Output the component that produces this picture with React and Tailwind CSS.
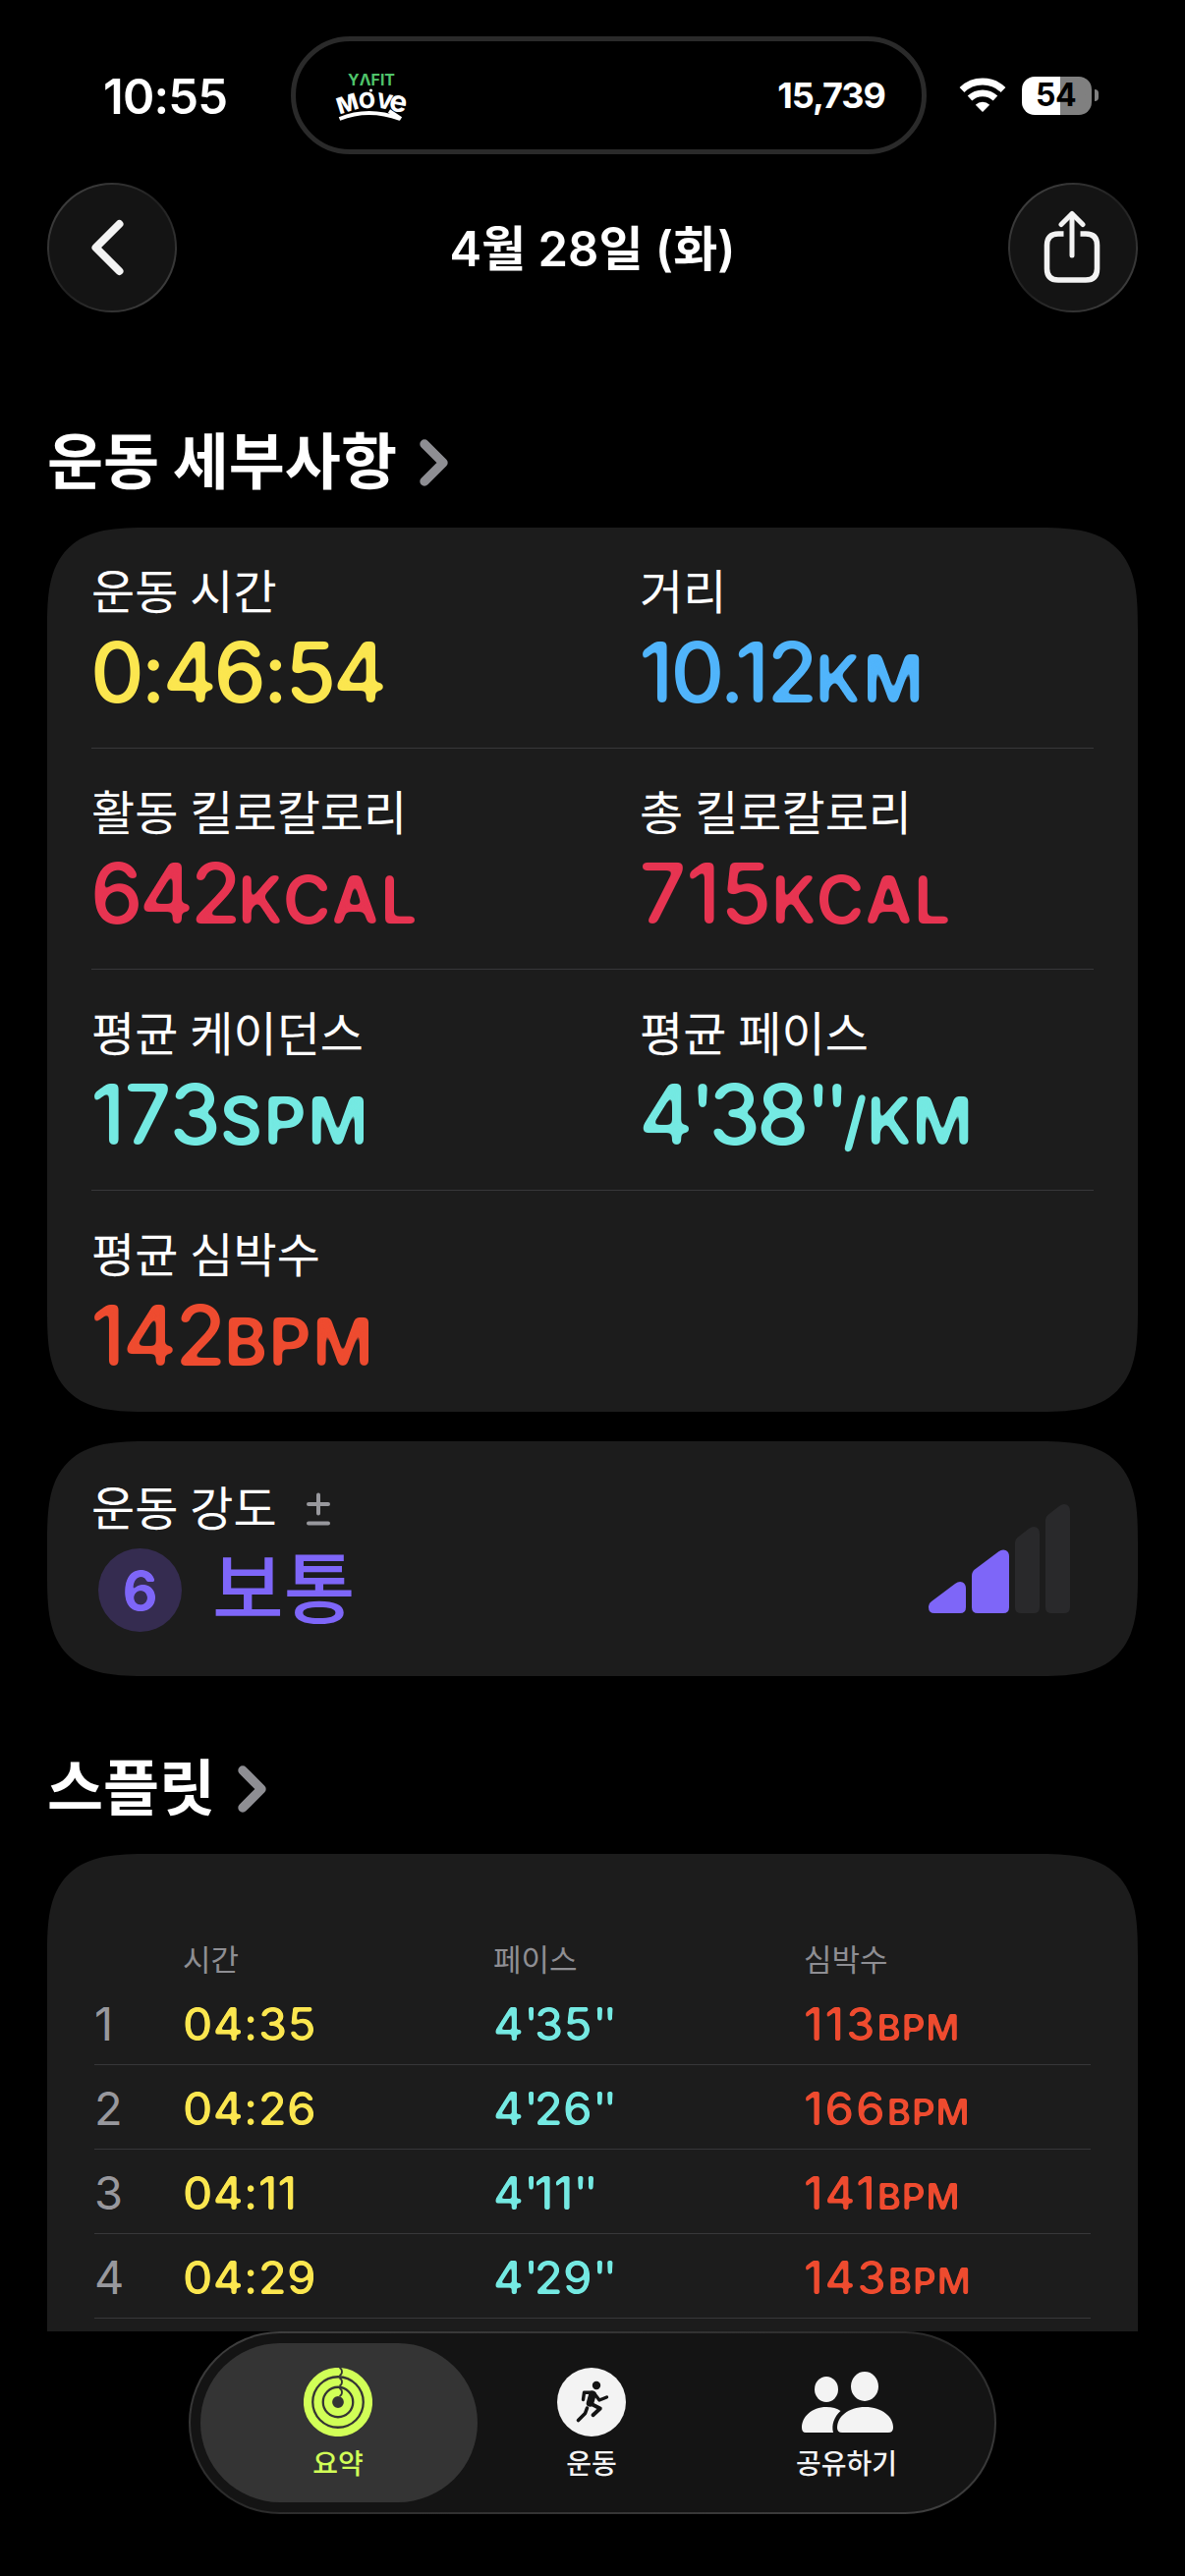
import React from 'react';

const workoutDetails = [
    [
        { label: '운동 시간', value: '0:46:54', unit: '', color: 'text-[#fbe64f]', tracking: 'tracking-[-3.6px]' },
        { label: '거리', value: '10.12', unit: 'KM', color: 'text-[#50b4fb]', tracking: 'tracking-[-2.8px]' }
    ],
    [
        { label: '활동 킬로칼로리', value: '642', unit: 'KCAL', color: 'text-[#e73451]', tracking: 'tracking-[-3.9px]' },
        { label: '총 킬로칼로리', value: '715', unit: 'KCAL', color: 'text-[#e73451]', tracking: 'tracking-[-0.5px]' }
    ],
    [
        { label: '평균 케이던스', value: '173', unit: 'SPM', color: 'text-[#74e9e2]', tracking: 'tracking-[-1.4px]' },
        { label: '평균 페이스', value: "4'38''", unit: '/KM', color: 'text-[#74e9e2]', tracking: 'tracking-[-4px]', unitTracking: 'tracking-[-0.8px]' }
    ],
    [
        { label: '평균 심박수', value: '142', unit: 'BPM', color: 'text-[#ee4b2f]', tracking: 'tracking-[-2.5px]' }
    ]
];

const splits = [
    { km: 1, time: '04:35', pace: "4'35''", heartRate: 113 },
    { km: 2, time: '04:26', pace: "4'26''", heartRate: 166 },
    { km: 3, time: '04:11', pace: "4'11''", heartRate: 141 },
    { km: 4, time: '04:29', pace: "4'29''", heartRate: 143 }
];

// Softens glyph corners so the figures read as a rounded typeface
const RoundFilters = () => (
    <svg width="0" height="0" className="absolute" aria-hidden="true">
        <filter id="round-lg" colorInterpolationFilters="sRGB">
            <feGaussianBlur stdDeviation="2.6" />
            <feComponentTransfer>
                <feFuncA type="linear" slope="7" intercept="-2.9" />
            </feComponentTransfer>
        </filter>
        <filter id="round-sm" colorInterpolationFilters="sRGB">
            <feGaussianBlur stdDeviation="1.2" />
            <feComponentTransfer>
                <feFuncA type="linear" slope="3.6" intercept="-1.25" />
            </feComponentTransfer>
        </filter>
    </svg>
);

// Prime marks sit closer to the digits than the default apostrophe spacing
const Figures = ({ text }) =>
    text.split(/('+)/).map((part, index) =>
        part.startsWith("'") ? (
            <span key={index} className="tracking-[-0.09em]">
                {part}
            </span>
        ) : (
            part
        )
    );

const MovoLogo = () => (
    <svg width="76" height="52" viewBox="0 0 76 52" className="overflow-visible font-bold">
        <text x="13" y="15.500" fontSize="15.5" fill="#4fc46a" textLength="48" lengthAdjust="spacingAndGlyphs">YΛFIT</text>
        <g fill="#fff" fontWeight="800">
            <text transform="translate(4.5 45.5) rotate(-17)" fontSize="23">M</text>
            <text transform="translate(24.5 39.5) rotate(-4)" fontSize="22">O</text>
            <text transform="translate(41 38) rotate(11)" fontSize="21">V</text>
            <text transform="translate(54 41) rotate(10)" fontSize="30" fontWeight="700">e</text>
        </g>
        <path d="M4.500 50 Q34 38 66 50" fill="none" stroke="#fff" strokeWidth="4" />
        <path d="M55 42 L67 50" stroke="#fff" strokeWidth="4" />
        <circle cx="36.500" cy="21" r="1.600" fill="#fff" />
    </svg>
);

const WifiIcon = () => (
    <svg width="48" height="36" viewBox="0 0 48 36" fill="none" stroke="#fff">
        <path d="M3 12.500 A30.500 30.500 0 0 1 45 12.500" strokeWidth="7" />
        <path d="M11 21 A19 19 0 0 1 37 21" strokeWidth="6.600" />
        <path d="M24 35 L16.800 27.700 A10.500 10.500 0 0 1 31.200 27.700 Z" fill="#fff" stroke="none" />
    </svg>
);

const Battery = () => (
    <div className="flex items-center gap-[3px]">
        <div className="flex h-[39px] w-[71px] items-center justify-center rounded-[13px] bg-linear-to-r from-white from-[55%] to-[#808080] to-[55%] pr-[2px] text-[32px] leading-none font-bold tracking-[-0.5px] text-black">
            54
        </div>
        <div className="h-3 w-1 rounded-r-full bg-[#808080]" />
    </div>
);

const StatusBar = () => (
    <div className="flex h-[157px] items-center pt-[37px]">
        <div className="w-[296px] pt-[2px] pl-[105px] text-[49px] leading-none font-semibold tracking-[-0.8px]">10:55</div>
        <div className="flex h-[120px] w-[647px] items-center justify-between rounded-[60px] border-[5px] border-[#2a2a2a] pr-[37px] pl-[40px]">
            <MovoLogo />
            <span className="text-[36px] leading-none font-bold tracking-[-1px]">15,739</span>
        </div>
        <div className="ml-[33px] flex items-center gap-[16px]">
            <WifiIcon />
            <Battery />
        </div>
    </div>
);

const RoundButton = ({ label, children }) => (
    <button aria-label={label} className="size-[132px] rounded-full bg-linear-to-br from-[#484848] via-[#202020] to-[#484848] p-[2px]">
        <span className="flex size-full items-center justify-center rounded-full bg-[#141414]">{children}</span>
    </button>
);

const SectionTitle = ({ children }) => (
    <div className="flex items-center gap-[23px]">
        <h2 className="text-[62px] leading-[72px] font-bold [word-spacing:-1px]">{children}</h2>
        <svg width="29" height="48" viewBox="0 0 29 48" fill="none" stroke="#8e8e93" strokeWidth="9.400" strokeLinecap="round" strokeLinejoin="round">
            <path d="M5 5 L24 24 L5 43" />
        </svg>
    </div>
);

const Metric = ({ label, value, unit, color, tracking, unitTracking = 'tracking-[1.4px]' }) => (
    <div>
        <p className="text-[48px] leading-[60px] [word-spacing:-1.5px]">{label}</p>
        <p className={`mt-[12px] -ml-[1px] text-[85px] leading-[80px] font-medium [filter:url(#round-lg)] ${tracking} ${color}`}>
            <Figures text={value} />
            <span className={`text-[67px] font-semibold ${unitTracking}`}>{unit}</span>
        </p>
    </div>
);

const IntensityBars = () => (
    <svg width="144" height="111" viewBox="0 0 144 111">
        <g fill="#7e66f8">
            <path d="M0 105 V104 Q0 101 3 99 L27 81 Q31 78 34.500 79.500 Q38 81 38 86 V105 Q38 111 32 111 H6 Q0 111 0 105 Z" />
            <path d="M44 105 V73 Q44 69 47 66.500 L71 48.500 Q75 45.500 78.500 47 Q82 48.500 82 53 V105 Q82 111 76 111 H50 Q44 111 44 105 Z" />
        </g>
        <g fill="#29292b">
            <path d="M88 105 V39 Q88 36 90.500 34 L102 25 Q106 22 109.500 23.500 Q113 25 113 30 V105 Q113 111 107 111 H94 Q88 111 88 105 Z" />
            <path d="M119 105 V16 Q119 13 121.500 11 L133 2 Q137 -1 140.500 0.500 Q144 2 144 7 V105 Q144 111 138 111 H125 Q119 111 119 105 Z" />
        </g>
    </svg>
);

const RingsIcon = ({ gap }) => (
    <svg width="70" height="70" viewBox="0 0 70 70" fill="none">
        {[31, 20.5, 10].map((r) => (
            <g key={r}>
                <circle cx="35" cy="35" r={r} stroke="#d1ff57" strokeWidth="8.200" />
                <path d={`M36.500 ${30.900 - r} A4.600 4.600 0 0 1 36.500 ${39.100 - r}`} stroke={gap} strokeWidth="1.800" />
            </g>
        ))}
    </svg>
);

const RunIcon = () => (
    <svg width="70" height="70" viewBox="0 0 70 70" fill="none" strokeLinecap="round" strokeLinejoin="round">
        <circle cx="35" cy="35" r="35" fill="#f3f3f3" />
        <circle cx="40" cy="18" r="4.200" fill="#141414" />
        <g stroke="#141414">
            <path d="M26.500 32.500 L27.500 25.300 H34.500 L38 26.500 L43 33 L50.500 30" strokeWidth="3.400" />
            <path d="M36 27 L33.500 36" strokeWidth="7.500" />
            <path d="M34 36.500 L43.800 41.500 L36.500 48.200" strokeWidth="3.900" />
            <path d="M30.500 41 L28.500 46.500 L21.500 53.500" strokeWidth="3.600" />
        </g>
    </svg>
);

const FriendsIcon = () => (
    <svg width="94" height="70" viewBox="0 0 94 70" fill="#f3f3f3">
        <ellipse cx="26" cy="22" rx="12" ry="13" />
        <ellipse cx="65" cy="19" rx="14" ry="15" />
        <path d="M1 61 C1 50 11 40 26 40 C32 40 37 41.500 40.500 44 C34 50 31 58 33 66 H5 Q1 66 1 61 Z" />
        <path d="M37 61 C37 50 48 40 65.500 40 C83 40 94 50 94 61 Q94 66 89 66 H42 Q37 66 37 61 Z" />
    </svg>
);

const TabBar = () => (
    <nav className="mx-auto h-[186px] w-[822px] rounded-[93px] bg-linear-to-br from-[#404040] via-[#2a2a2a] to-[#404040] p-[2px]">
        <div className="flex h-full -space-x-6 rounded-[91px] bg-[#141414] p-[10px] text-[28px] font-medium text-[#f3f3f3]">
            <div className="flex w-[282px] flex-col items-center rounded-[81px] bg-[#343434] pt-[25px] pr-[2px] text-[#d1ff57]">
                <RingsIcon gap="#343434" />
                <span className="mt-[9px] leading-[38px]">요약</span>
            </div>
            <div className="flex w-[282px] flex-col items-center pt-[25px] pr-[2px]">
                <RunIcon />
                <span className="mt-[9px] leading-[38px]">운동</span>
            </div>
            <div className="flex w-[282px] flex-col items-center pt-[25px] pl-[1px]">
                <FriendsIcon />
                <span className="mt-[9px] leading-[38px]">공유하기</span>
            </div>
        </div>
    </nav>
);

const App = () => {
    return (
        <div className="h-[2622px] w-[1206px] overflow-hidden bg-black font-['Inter','Noto_Sans_CJK_KR',sans-serif] text-white">
            <RoundFilters />
            <StatusBar />

            {/* Header */}
            <header className="mt-[29px] flex items-center justify-between px-[48px]">
                <RoundButton label="뒤로">
                    <svg width="34" height="58" viewBox="0 0 34 58" fill="none" stroke="#f3f3f3" strokeWidth="8" strokeLinecap="round" strokeLinejoin="round" className="-ml-[8px]">
                        <path d="M28.500 5 L4.500 29 L28.500 53" />
                    </svg>
                </RoundButton>
                <h1 className="pt-[4px] text-[49px] leading-[60px] font-semibold">4월 28일 (화)</h1>
                <RoundButton label="공유">
                    <svg width="58" height="74" viewBox="0 0 58 74" fill="none" stroke="#f3f3f3" strokeWidth="5.600" strokeLinecap="round" strokeLinejoin="round" className="-mt-[3px] -ml-[2px]">
                        <path d="M20.500 24 H15 Q3.500 24 3.500 35.500 V59.500 Q3.500 71 15 71 H43 Q54.500 71 54.500 59.500 V35.500 Q54.500 24 43 24 H37.500" strokeLinecap="butt" />
                        <path d="M29 4 V46" strokeWidth="5" />
                        <path d="M18 14.500 L29 3.500 L40 14.500" strokeWidth="5" />
                    </svg>
                </RoundButton>
            </header>

            <main className="px-[48px] pt-[117px]">
                {/* Workout details */}
                <SectionTitle>운동 세부사항</SectionTitle>
                <section className="mt-[30px] rounded-[80px] bg-[#1c1c1c] px-[45px] supports-[corner-shape:squircle]:rounded-[104px] supports-[corner-shape:squircle]:[corner-shape:superellipse(1.6)]">
                    {workoutDetails.map((row, index) => (
                        <div key={index} className="grid h-[225px] grid-cols-[558px_1fr] border-b border-[#373739] pt-[36px] last:border-b-0">
                            {row.map((metric) => (
                                <Metric key={metric.label} {...metric} />
                            ))}
                        </div>
                    ))}
                </section>

                {/* Effort */}
                <section className="mt-[30px] flex h-[239px] justify-between rounded-[80px] bg-[#1c1c1c] pr-[69px] pl-[45px] supports-[corner-shape:squircle]:rounded-[104px] supports-[corner-shape:squircle]:[corner-shape:superellipse(1.6)]">
                    <div className="pt-[39px]">
                        <div className="flex items-center gap-[29px]">
                            <p className="text-[48px] leading-[60px] [word-spacing:-1.5px]">운동 강도</p>
                            <svg width="26" height="34" viewBox="0 0 26 34" stroke="#98989d" strokeWidth="4" strokeLinecap="round">
                                <path d="M3 12 H23 M13 2.500 V21.500 M3 31.500 H23" />
                            </svg>
                        </div>
                        <div className="mt-[10px] ml-[7px] flex items-center gap-[31px] text-[#7e66f8]">
                            <div className="flex size-[85px] items-center justify-center rounded-full bg-[#352c50]">
                                <span className="text-[55px] leading-[60px] font-bold [filter:url(#round-sm)]">6</span>
                            </div>
                            <span className="text-[79px] leading-[85px] font-medium">보통</span>
                        </div>
                    </div>
                    <div className="pt-[64px]">
                        <IntensityBars />
                    </div>
                </section>

                {/* Splits */}
                <div className="mt-[79px]">
                    <SectionTitle>스플릿</SectionTitle>
                </div>
                <section className="mt-[30px] h-[486px] overflow-hidden rounded-t-[80px] bg-[#1c1c1c] px-[48px] pt-[88px] supports-[corner-shape:squircle]:rounded-t-[104px] supports-[corner-shape:squircle]:[corner-shape:superellipse(1.6)]">
                    <div className="grid h-[41px] grid-cols-[90px_316px_316px_1fr] text-[31px] leading-[40px] text-[#8e8e93]">
                        <span />
                        <span>시간</span>
                        <span>페이스</span>
                        <span>심박수</span>
                    </div>
                    {splits.map((split) => (
                        <div key={split.km} className="grid h-[86px] grid-cols-[90px_316px_316px_1fr] border-b border-[#373739] text-[47px] leading-[87px] font-medium">
                            <span className="font-normal text-[#98989d]">{split.km}</span>
                            <span className="tracking-[0.4px] text-[#fbe64f] [filter:url(#round-sm)]">{split.time}</span>
                            <span className="tracking-[0.4px] text-[#74e9e2] [filter:url(#round-sm)]">
                                <Figures text={split.pace} />
                            </span>
                            <span className="tracking-[2px] text-[#ee4b2f] [filter:url(#round-sm)]">
                                {split.heartRate}
                                <span className="text-[37px] font-semibold tracking-[0.8px]">BPM</span>
                            </span>
                        </div>
                    ))}
                </section>
            </main>

            <TabBar />
        </div>
    );
};

export default App;
